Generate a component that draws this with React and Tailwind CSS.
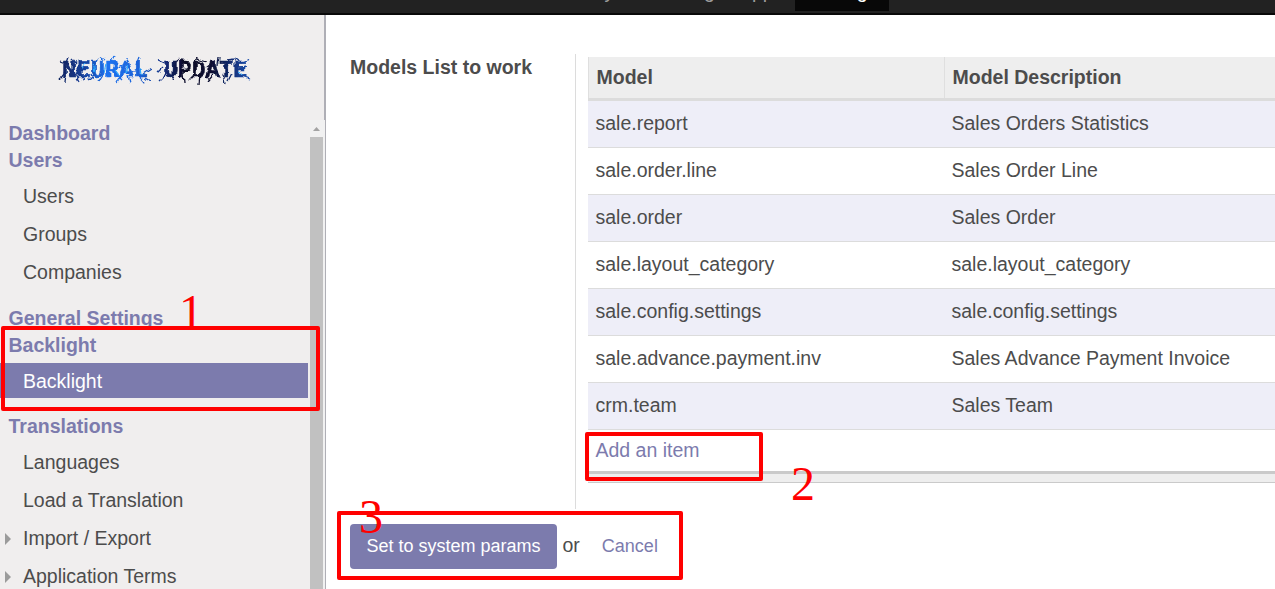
const models = [
  ['sale.report', 'Sales Orders Statistics'],
  ['sale.order.line', 'Sales Order Line'],
  ['sale.order', 'Sales Order'],
  ['sale.layout_category', 'sale.layout_category'],
  ['sale.config.settings', 'sale.config.settings'],
  ['sale.advance.payment.inv', 'Sales Advance Payment Invoice'],
  ['crm.team', 'Sales Team'],
];

const sections = [
  { title: 'Dashboard', items: [] },
  {
    title: 'Users',
    spacing: 'pb-[13px]',
    items: [{ label: 'Users' }, { label: 'Groups' }, { label: 'Companies' }],
  },
  { title: 'General Settings', items: [] },
  { title: 'Backlight', spacing: 'pb-[12px]', items: [{ label: 'Backlight', active: true }] },
  {
    title: 'Translations',
    items: [
      { label: 'Languages' },
      { label: 'Load a Translation' },
      { label: 'Import / Export', folded: true },
      { label: 'Application Terms', folded: true },
    ],
  },
];

function TopBar() {
  return (
    <nav className="flex h-[15px] shrink-0 items-start overflow-hidden border-b-2 border-[#090909] bg-[#222222] pl-[534px] leading-[20px] text-[#9d9d9d]">
      <span className="-mt-[19px] w-[104px] shrink-0">Inventory</span>
      <span className="-mt-[19px] w-[101px] shrink-0">Invoicing</span>
      <span className="-mt-[19px] w-[56px] shrink-0">Apps</span>
      <span className="flex h-[11px] w-[94px] shrink-0 justify-center bg-[#080808] text-white">
        <span className="-mt-[19px]">Settings</span>
      </span>
    </nav>
  );
}

function Logo() {
  return (
    <svg className="ml-[55px] mt-[39px] block" width="198" height="32" viewBox="0 0 198 32">
      <defs>
        <linearGradient id="ink" gradientUnits="userSpaceOnUse" x1="4" y1="0" x2="194" y2="0">
          <stop offset="0" stopColor="#10205c" />
          <stop offset="0.14" stopColor="#1743a0" />
          <stop offset="0.25" stopColor="#1b72f0" />
          <stop offset="0.42" stopColor="#1a62d8" />
          <stop offset="0.55" stopColor="#152f80" />
          <stop offset="0.66" stopColor="#090a26" />
          <stop offset="0.8" stopColor="#0a0d30" />
          <stop offset="0.92" stopColor="#14317c" />
          <stop offset="1" stopColor="#1a4fae" />
        </linearGradient>
        <filter id="jag" x="-5%" y="-20%" width="110%" height="140%">
          <feTurbulence type="fractalNoise" baseFrequency="0.2" numOctaves="1" seed="4" result="n" />
          <feDisplacementMap in="SourceGraphic" in2="n" scale="5" xChannelSelector="R" yChannelSelector="G" />
          <feGaussianBlur stdDeviation="0.45" />
        </filter>
      </defs>
      <g filter="url(#jag)" fill="url(#ink)" stroke="url(#ink)">
        <text x="7" y="23" textLength="86" lengthAdjust="spacingAndGlyphs" fontFamily="Liberation Mono, monospace" fontSize="24" fontWeight="700" strokeWidth="0.5">NEURAL</text>
        <text x="109" y="23" textLength="83" lengthAdjust="spacingAndGlyphs" fontFamily="Liberation Mono, monospace" fontSize="24" fontWeight="700" strokeWidth="0.5">UPDATE</text>
        <path
          fill="none"
          strokeWidth="1.3"
          d="M5 7l8 3M13 3l-3 9M10 18l-6 7M11 20l-1 9M19 18l5 9M17 4l4 5M25 7l8 0M24 16l-3 5M36 20l3 7M31 24l-4 2M43 4l-4 8M40 20l-7 7M50 6l-5-3M49 19l-5 8M56 8l3-6M60 19l7 7M65 14l4-4M72 4l1 6M73 21l2 8M67 20l-5 8M77 18l5-3M84 3l-3 8M82 20l8 9M88 20l9-6M90 24l5 3M103 6l9 4M112 19l-8 8M107 14l-5 5M124 4l-5 8M120 20l-3 6M128 19l1 10M126 6l8 1M139 9l3-5M145 19l-1 12M142 5l10 3M140 20l-7 7M151 14l5-4M164 3l-1 9M160 19l-7 8M168 20l2 10M170 14l3-3M172 6l8-1M177 19l-4 8M180 4l7 5M194 5l-8 4M187 22l8 3M183 15l9-2"
        />
      </g>
      <g filter="url(#jag)" stroke="#29a8ff" strokeWidth="1.2" fill="none">
        <path d="M38 10l2 8M51 10l-2 9M60 16l4 5M73 10l-3 8M85 14l1 7M30 9l-3 5M183 18l4 2" />
      </g>
    </svg>
  );
}

function SideItem({ label, active, folded }) {
  return (
    <li
      className={
        active
          ? 'mb-[3px] flex h-[35px] w-[308px] items-center bg-[#7c7bad] pt-[2px] text-white'
          : 'mb-[3px] flex h-[35px] w-[308px] items-center pt-[2px] text-[#4c4c4c]'
      }
    >
      <span className="flex w-[23px] shrink-0 pl-[5px]">
        {folded && (
          <svg width="6" height="12" viewBox="0 0 6 12" className="mt-px">
            <path d="M0 0L6 6L0 12Z" fill="#9b9b9b" />
          </svg>
        )}
      </span>
      {label}
    </li>
  );
}

function Sidebar() {
  return (
    <aside className="flex h-full w-[326px] shrink-0 flex-col overflow-hidden bg-[#f0eeee]">
      <div className="h-[105px] shrink-0 border-r-2 border-[#afafb6]">
        <Logo />
      </div>
      <div className="flex min-h-0 flex-1 border-r border-[#afafb6]">
        <div className="w-[310px] shrink-0 overflow-hidden">
          {sections.map(({ title, spacing, items }) => (
            <section key={title} className={spacing}>
              <h2 className="flex h-[27px] items-center pl-[8.5px] font-bold text-[#7c7bad]">{title}</h2>
              {items.length > 0 && (
                <ul className="pt-[4px]">
                  {items.map((item) => (
                    <SideItem key={item.label} {...item} />
                  ))}
                </ul>
              )}
            </section>
          ))}
        </div>
        <div className="flex flex-1 flex-col bg-[#f1f1f1]">
          <svg width="15" height="17" viewBox="0 0 15 17" className="shrink-0">
            <path d="M3 11L6.5 7L10 11Z" fill="#a3a3a3" />
          </svg>
          <div className="w-[13px] flex-1 bg-[#c1c1c1]" />
        </div>
      </div>
    </aside>
  );
}

function ModelTable() {
  return (
    <div className="mt-[3px] flex flex-1 flex-col">
      <div className="flex h-[44px] border-b-[3px] border-[#dcdcdc] bg-[#eeeeee] font-bold">
        <div className="w-[356px] shrink-0 border-l border-[#dfdfdf] pl-[7.5px] leading-[41px]">Model</div>
        <div className="flex-1 border-l border-[#dfdfdf] pl-[7.5px] leading-[41px]">Model Description</div>
      </div>
      {models.map(([model, description]) => (
        <div key={model} className="flex h-[47px] border-b border-[#dcdcdc] leading-[45px] odd:bg-white even:bg-[#eeeef8]">
          <div className="w-[356px] shrink-0 pl-[7.5px]">{model}</div>
          <div className="flex-1 pl-[7.5px]">{description}</div>
        </div>
      ))}
      <div className="h-[41px] pl-[7.5px] leading-[41px] text-[#7c7bad]">Add an item</div>
      <div className="h-[12px] border-b border-t-[3px] border-b-[#cacaca] border-t-[#cacaca] bg-[#eeeeee]" />
    </div>
  );
}

export default function App() {
  return (
    <div className="relative flex h-[589px] w-[1275px] flex-col overflow-hidden bg-white font-['Liberation_Sans',Arial,sans-serif] text-[19.5px] text-[#4c4c4c]">
      <TopBar />
      <div className="flex min-h-0 flex-1">
        <Sidebar />
        <main className="flex min-w-0 flex-1 flex-col pl-[24px] pt-[39px]">
          <div className="flex h-[455px] shrink-0">
            <div className="w-[225px] shrink-0 pt-px font-bold leading-[25px]">Models List to work</div>
            <div className="flex flex-1 items-start border-l border-[#dcdcdc] pl-[12px]">
              <ModelTable />
            </div>
          </div>
          <footer className="mt-[15px] flex items-start">
            <button className="h-[45px] w-[207px] rounded-[4px] bg-[#7c7bad] text-[18px] text-white">
              Set to system params
            </button>
            <span className="ml-[5.5px] leading-[42px]">or</span>
            <a className="ml-[22px] text-[18px] leading-[44px] text-[#7c7bad]">Cancel</a>
          </footer>
        </main>
      </div>

      {/* Numbered step highlights laid over the page */}
      <div className="absolute left-[1px] top-[326px] h-[85px] w-[319px] rounded-[2px] border-4 border-[#ff0000]" />
      <div className="absolute left-[585px] top-[432px] h-[49px] w-[178px] rounded-[2px] border-4 border-[#ff0000]" />
      <div className="absolute left-[337px] top-[511px] h-[69px] w-[346px] rounded-[2px] border-4 border-[#ff0000]" />
      <div className="absolute left-[179px] top-[286px] h-[40px] overflow-hidden font-['Liberation_Serif',serif] text-[48px] leading-[52px] text-[#ff0000]">1</div>
      <div className="absolute left-[791px] top-[458px] font-['Liberation_Serif',serif] text-[48px] leading-[52px] text-[#ff0000]">2</div>
      <div className="absolute left-[359px] top-[491px] font-['Liberation_Serif',serif] text-[48px] leading-[52px] text-[#ff0000]">3</div>
    </div>
  );
}
